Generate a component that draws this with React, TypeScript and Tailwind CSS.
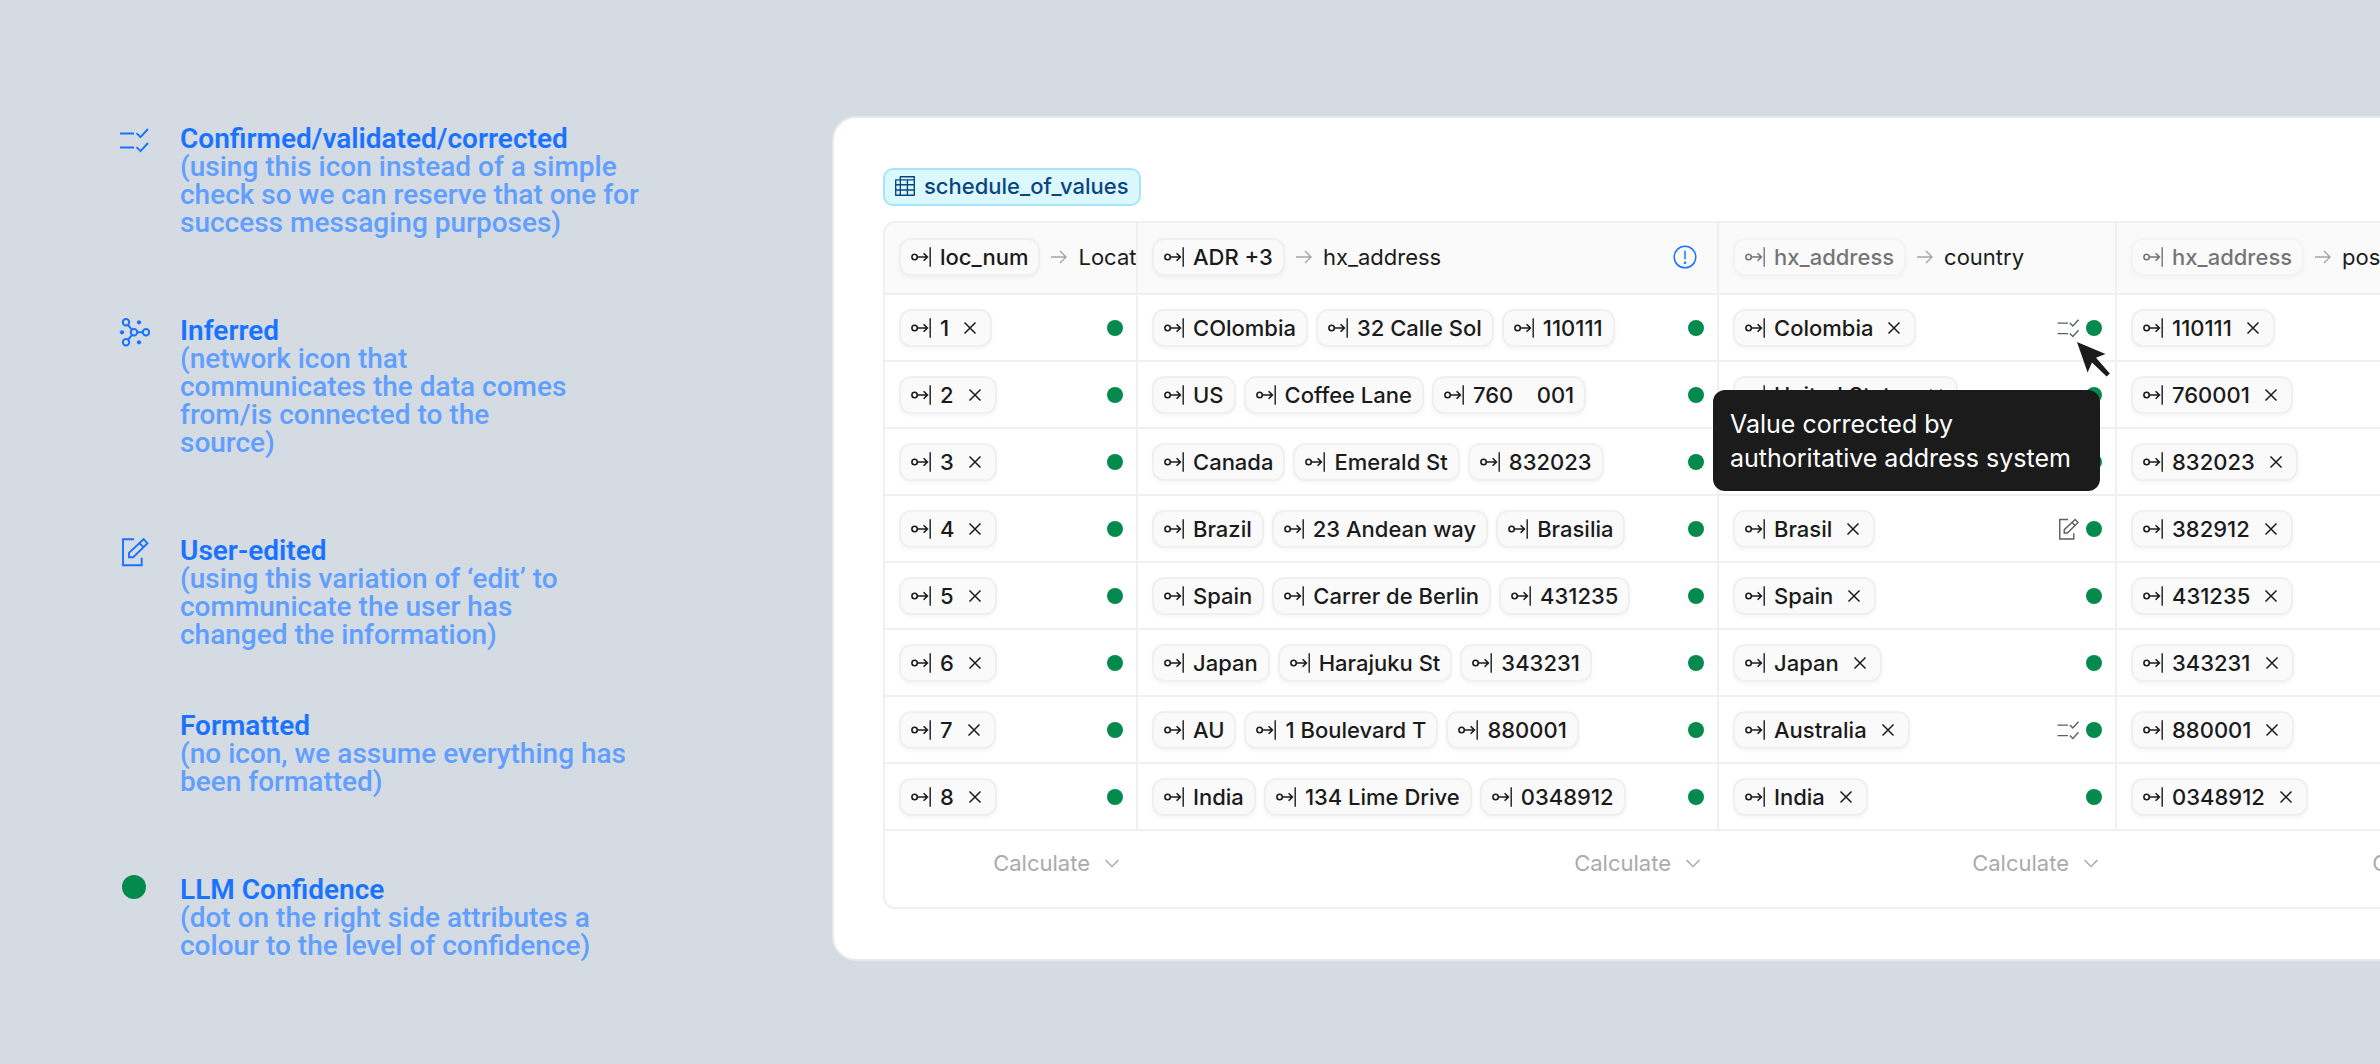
import { ReactNode } from 'react'

type IconProps = { className?: string }

function ChecklistIcon({ className }: IconProps) {
  return (
    <svg viewBox="0 0 32 32" fill="none" stroke="currentColor" strokeWidth="1.9" className={className} aria-hidden="true">
      <path d="M2 9.5h14M2 23.5h14M18.5 9.2l4 4L30 5M18.5 23.2l4 4L30 19" />
    </svg>
  )
}

function NetworkIcon({ className }: IconProps) {
  return (
    <svg viewBox="0 0 32 32" fill="none" stroke="currentColor" strokeWidth="2" className={className} aria-hidden="true">
      <circle cx="8" cy="6.3" r="3.2" />
      <circle cx="8" cy="26.3" r="3.2" />
      <circle cx="16" cy="16.3" r="3.2" />
      <circle cx="28" cy="16.3" r="3.2" />
      <path d="M10 8.8l4 5M10 23.8l4-5M19.2 16.3h5.6" />
      <g fill="currentColor" stroke="none">
        <circle cx="21" cy="6.3" r="2.1" />
        <circle cx="21" cy="26.3" r="2.1" />
        <circle cx="4" cy="16.3" r="2.1" />
      </g>
    </svg>
  )
}

function EditIcon({ className }: IconProps) {
  return (
    <svg viewBox="0 0 32 32" fill="none" stroke="currentColor" strokeWidth="1.9" className={className} aria-hidden="true">
      <path d="M16 3.3H5v26h18.7v-7.6" />
      <path d="M11 21.3v-4.4L25.6 3.2l3.8 4.2-14.2 13.9zM21.4 7.2l4 4" />
    </svg>
  )
}

function SourceIcon({ className }: IconProps) {
  return (
    <svg viewBox="0 0 20 20" fill="none" stroke="currentColor" strokeWidth="1.6" className={className} aria-hidden="true">
      <circle cx="3.6" cy="10" r="2.7" />
      <path d="M6.3 10H16M12.6 6.2l3.8 3.8-3.8 3.8" />
      <path d="M19.2.3v19.4" strokeWidth="1.4" />
    </svg>
  )
}

function CloseIcon() {
  return (
    <svg viewBox="0 0 20 20" fill="none" stroke="currentColor" strokeWidth="1.5" className="size-5" aria-hidden="true">
      <path d="M4.5 4.5l11 11M15.5 4.5l-11 11" />
    </svg>
  )
}

function ArrowIcon() {
  return (
    <svg viewBox="0 0 16 16" fill="none" stroke="currentColor" strokeWidth="1.4" className="size-4 shrink-0 text-[#a3a6a6]" aria-hidden="true">
      <path d="M0 8h15M9 2l6 6-6 6" />
    </svg>
  )
}

function ChevronIcon() {
  return (
    <svg viewBox="0 0 20 20" fill="none" stroke="currentColor" strokeWidth="1.5" className="size-5" aria-hidden="true">
      <path d="M3.5 7l6.5 6.5L16.5 7" />
    </svg>
  )
}

function TableIcon() {
  return (
    <svg viewBox="0 0 20 20" fill="none" stroke="currentColor" strokeWidth="1.4" strokeLinejoin="round" className="size-5" aria-hidden="true">
      <path d="M5.3.7h14v18.6H.7V3.9h4.6zM5.3 3.9v15.4M12.4 3.9v15.4M5.3 3.9h14M.7 8.8h18.6M.7 14h18.6" />
    </svg>
  )
}

function InfoIcon() {
  return (
    <svg viewBox="0 0 24 24" fill="none" stroke="currentColor" strokeWidth="1.5" className="size-6 text-[#1a73ff]" aria-hidden="true">
      <circle cx="12" cy="12" r="10.8" />
      <path d="M12 5.8v8.4" />
      <circle cx="12" cy="17.8" r="1.3" fill="currentColor" stroke="none" />
    </svg>
  )
}

function CursorIcon({ className }: IconProps) {
  return (
    <svg viewBox="0 0 34 36" fill="#1b1b1b" className={className} aria-hidden="true">
      <path d="M0 0l28.5 12-9.5 3.8L32.8 31.4 29.6 34.6 15 20.4 10.6 30.4z" />
    </svg>
  )
}

const legend: { title: string; text: string; width: string; icon: ReactNode }[] = [
  {
    title: 'Confirmed/validated/corrected',
    text: '(using this icon instead of a simple check so we can reserve that one for success messaging purposes)',
    width: 'w-[480px]',
    icon: <ChecklistIcon className="size-8" />,
  },
  {
    title: 'Inferred',
    text: '(network icon that communicates the data comes from/is connected to the source)',
    width: 'w-[400px]',
    icon: <NetworkIcon className="size-8" />,
  },
  {
    title: 'User-edited',
    text: '(using this variation of ‘edit’ to communicate the user has changed the information)',
    width: 'w-[400px]',
    icon: <EditIcon className="size-8" />,
  },
  {
    title: 'Formatted',
    text: '(no icon, we assume everything has been formatted)',
    width: 'w-[480px]',
    icon: null,
  },
  {
    title: 'LLM Confidence',
    text: '(dot on the right side attributes a colour to the level of confidence)',
    width: 'w-[440px]',
    icon: <span className="mx-1 block size-6 rounded-full bg-[#058a4e]" />,
  },
]

type Row = {
  id: string
  address: string[]
  country: string
  postal: string
  mark?: 'corrected' | 'edited'
  tooltip?: boolean
}

const rows: Row[] = [
  { id: '1', address: ['COlombia', '32 Calle Sol', '110111'], country: 'Colombia', postal: '110111', mark: 'corrected', tooltip: true },
  { id: '2', address: ['US', 'Coffee Lane', '760    001'], country: 'United States', postal: '760001' },
  { id: '3', address: ['Canada', 'Emerald St', '832023'], country: 'Canada', postal: '832023' },
  { id: '4', address: ['Brazil', '23 Andean way', 'Brasilia'], country: 'Brasil', postal: '382912', mark: 'edited' },
  { id: '5', address: ['Spain', 'Carrer de Berlin', '431235'], country: 'Spain', postal: '431235' },
  { id: '6', address: ['Japan', 'Harajuku St', '343231'], country: 'Japan', postal: '343231' },
  { id: '7', address: ['AU', '1 Boulevard T', '880001'], country: 'Australia', postal: '880001', mark: 'corrected' },
  { id: '8', address: ['India', '134 Lime Drive', '0348912'], country: 'India', postal: '0348912' },
]

function Chip({ label, removable, faded }: { label: string; removable?: boolean; faded?: boolean }) {
  return (
    <span
      className={`flex h-[38px] shrink-0 items-center rounded-xl border-2 border-[#f0f0f0] bg-[#fafafa] px-[10px] font-medium shadow-[0_2px_4px_rgba(0,0,0,0.04)] ${
        faded ? 'opacity-60' : ''
      }`}
    >
      <SourceIcon className="mr-[9px] size-5" />
      <span className="whitespace-pre">{label}</span>
      {removable && (
        <button type="button" aria-label={`Remove ${label}`} className="ml-[11px]">
          <CloseIcon />
        </button>
      )}
    </span>
  )
}

function Dot() {
  return <span className="size-4 shrink-0 rounded-full bg-[#058a4e]" />
}

function HeaderCell({ source, target, faded, info }: { source: string; target: string; faded?: boolean; info?: boolean }) {
  return (
    <th className="h-[72px] overflow-hidden border-r-2 border-b-2 border-[#f0f0f0] bg-[#fafafa] p-0 text-left font-normal">
      <div className="flex items-center gap-[11px] pr-5 pb-0.5 pl-[14px] whitespace-nowrap">
        <Chip label={source} faded={faded} />
        <ArrowIcon />
        <span>{target}</span>
        {info && (
          <span className="ml-auto">
            <InfoIcon />
          </span>
        )}
      </div>
    </th>
  )
}

function Cell({ children, mark, tooltip }: { children: ReactNode; mark?: Row['mark']; tooltip?: boolean }) {
  return (
    <td className="h-[67px] border-r-2 border-b-2 border-[#f0f0f0] p-0">
      <div className="relative flex items-center gap-2 pr-[13px] pl-[14px]">
        {children}
        <span className="ml-auto flex items-center gap-1.5 text-[#5c6060]">
          {mark === 'corrected' && <ChecklistIcon className="size-6" />}
          {mark === 'edited' && <EditIcon className="size-6" />}
          <Dot />
        </span>
        {tooltip && (
          <>
            <CursorIcon className="absolute top-[33px] right-1 z-20 h-9 w-[34px]" />
            <div
              role="tooltip"
              className="absolute top-[81px] -left-1.5 z-10 w-[387px] rounded-xl bg-[#1b1b1b] px-[17px] pt-[17px] pb-4 text-[25px] leading-[34px] text-white"
            >
              Value corrected by authoritative address system
            </div>
          </>
        )}
      </div>
    </td>
  )
}

export default function App() {
  return (
    <div className="flex min-h-screen items-start overflow-hidden bg-[#d5dbe3]">
      {/* Legend */}
      <ul className="flex w-[832px] shrink-0 flex-col pt-[125px] pl-[118px] font-[Roboto,sans-serif] text-[28px] leading-7 font-medium">
        {legend.map((item) => (
          <li key={item.title} className={item.icon ? 'mb-20 flex gap-[30px]' : '-mt-[17px] mb-20 flex gap-[30px]'}>
            <span className="-mt-px w-8 shrink-0 text-[#1a73ff]">{item.icon}</span>
            <div className={item.width}>
              <h2 className="font-semibold text-[#1a73ff]">{item.title}</h2>
              <p className="text-[#619fff]">{item.text}</p>
            </div>
          </li>
        ))}
      </ul>

      {/* Table card */}
      <main className="mt-[116px] min-w-0 flex-1 overflow-hidden rounded-l-3xl border-2 border-r-0 border-[#e8e9ea] bg-white pt-[50px] pb-[50px] pl-[49px] font-[Inter,sans-serif] text-[22px] leading-7 text-[#1b1b1b]">
        <div className="inline-flex h-[38px] items-center gap-[9px] rounded-[10px] border-2 border-[#a5e6fb] bg-[#dbf8ff] px-[10px] pb-0.5 font-medium text-[#0b4580]">
          <TableIcon />
          schedule_of_values
        </div>

        <div className="mt-[15px] w-[1636px] overflow-hidden rounded-xl border-2 border-[#f0f0f0]">
          <table className="w-full table-fixed border-separate border-spacing-0">
            <colgroup>
              <col className="w-[253px]" />
              <col className="w-[581px]" />
              <col className="w-[398px]" />
              <col />
            </colgroup>
            <thead>
              <tr>
                <HeaderCell source="loc_num" target="Location" />
                <HeaderCell source="ADR +3" target="hx_address" info />
                <HeaderCell source="hx_address" target="country" faded />
                <HeaderCell source="hx_address" target="postal_code" faded />
              </tr>
            </thead>
            <tbody>
              {rows.map((row) => (
                <tr key={row.id}>
                  <Cell>
                    <Chip label={row.id} removable />
                  </Cell>
                  <Cell>
                    {row.address.map((part) => (
                      <Chip key={part} label={part} />
                    ))}
                  </Cell>
                  <Cell mark={row.mark} tooltip={row.tooltip}>
                    <Chip label={row.country} removable />
                  </Cell>
                  <Cell>
                    <Chip label={row.postal} removable />
                  </Cell>
                </tr>
              ))}
            </tbody>
            <tfoot>
              <tr>
                {['loc_num', 'address', 'country', 'postal'].map((column) => (
                  <td key={column} className="h-[76px] p-0 pt-[18px] pr-4 align-top">
                    <button type="button" className="ml-auto flex items-center gap-3 text-[#a9abac]">
                      Calculate
                      <ChevronIcon />
                    </button>
                  </td>
                ))}
              </tr>
            </tfoot>
          </table>
        </div>
      </main>
    </div>
  )
}
